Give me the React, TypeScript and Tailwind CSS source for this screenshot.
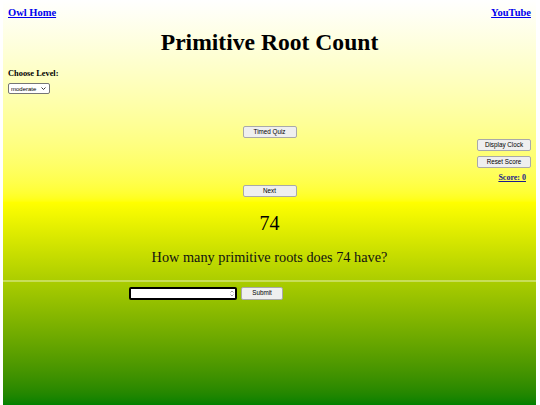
import React from "react"

const serif = "font-['Liberation_Serif',_'Times_New_Roman',_serif]"
const sans = "font-['Liberation_Sans',_Arial,_sans-serif]"

const Btn = ({ label, w }: { label: string; w: string }) => (
    <button
        className={`${sans} ${w} h-[12px] bg-[#efefef] border border-[#a9a9a9] rounded-[2px] text-[6.3px] leading-none text-black flex items-center justify-center`}
    >
        {label}
    </button>
)

export default function App() {
    return (
        <div className="w-full h-[405px] bg-white pl-[3px] pr-[4px] overflow-hidden">
            <div className={`${serif} h-full px-[5px] bg-linear-to-b from-white via-[#ffff00] to-[#008000] text-black`}>

                {/* top links */}
                <div className="pt-[7px] flex justify-between text-[10.5px] leading-[12px] font-bold">
                    <a href="#" className="underline text-[#0000ee]">Owl Home</a>
                    <a href="#" className="underline text-[#0000ee]">YouTube</a>
                </div>

                <h1 className="mt-[9px] text-center text-[23.6px] leading-[28px] font-bold">
                    Primitive Root Count
                </h1>

                <div className="mt-[13px] text-[8.4px] leading-[10px] font-bold">Choose Level:</div>
                <div className="mt-[4px] relative w-[42px] h-[11px]">
                    <select
                        defaultValue="moderate"
                        className={`${sans} block appearance-none w-full h-full bg-white border border-[#767676] rounded-[2px] text-[6px] leading-none pl-[2px] text-black`}
                    >
                        <option value="easy">easy</option>
                        <option value="moderate">moderate</option>
                        <option value="hard">hard</option>
                    </select>
                    <svg className="absolute right-[4px] top-[4px] pointer-events-none" width="5" height="3" viewBox="0 0 5 3">
                        <path d="M0.5 0.5 L2.5 2.5 L4.5 0.5" fill="none" stroke="#222" strokeWidth="0.9" />
                    </svg>
                </div>

                <div className="mt-[32px] flex justify-center">
                    <Btn label="Timed Quiz" w="w-[54px]" />
                </div>

                {/* right side column */}
                <div className="mt-[1px] flex flex-col items-end">
                    <Btn label="Display Clock" w="w-[54px]" />
                    <div className="mt-[5px]">
                        <Btn label="Reset Score" w="w-[54px]" />
                    </div>
                    <a href="#" className="mt-[5px] mr-[5px] text-[8px] leading-[10px] font-bold underline text-[#1c1c8c]">
                        Score: 0
                    </a>
                </div>

                <div className="mt-[2px] flex justify-center">
                    <Btn label="Next" w="w-[54px]" />
                </div>

                <div className="mt-[14px] text-center text-[20px] leading-[24px]">74</div>

                <div className="mt-[13px] text-center text-[14.3px] leading-[18px] text-[#111]">
                    How many primitive roots does 74 have?
                </div>

                <div className="mt-[14px] -mx-[5px] h-[2px] bg-white/35" />

                <div className="mt-[5px] ml-[121px] flex items-center gap-[4px]">
                    <div className="w-[108px] h-[13px] bg-white border-2 border-black rounded-[2px] flex items-center justify-end pr-[1px]">
                        <svg width="4" height="7" viewBox="0 0 4 7">
                            <path d="M0.5 2.5 L2 1 L3.5 2.5" fill="none" stroke="#666" strokeWidth="0.6" />
                            <path d="M0.5 4.5 L2 6 L3.5 4.5" fill="none" stroke="#666" strokeWidth="0.6" />
                        </svg>
                    </div>
                    <button
                        className={`${sans} w-[42px] h-[13px] bg-[#efefef] border border-[#a9a9a9] rounded-[2px] text-[6.3px] leading-none text-black`}
                    >
                        Submit
                    </button>
                </div>
            </div>
        </div>
    )
}
